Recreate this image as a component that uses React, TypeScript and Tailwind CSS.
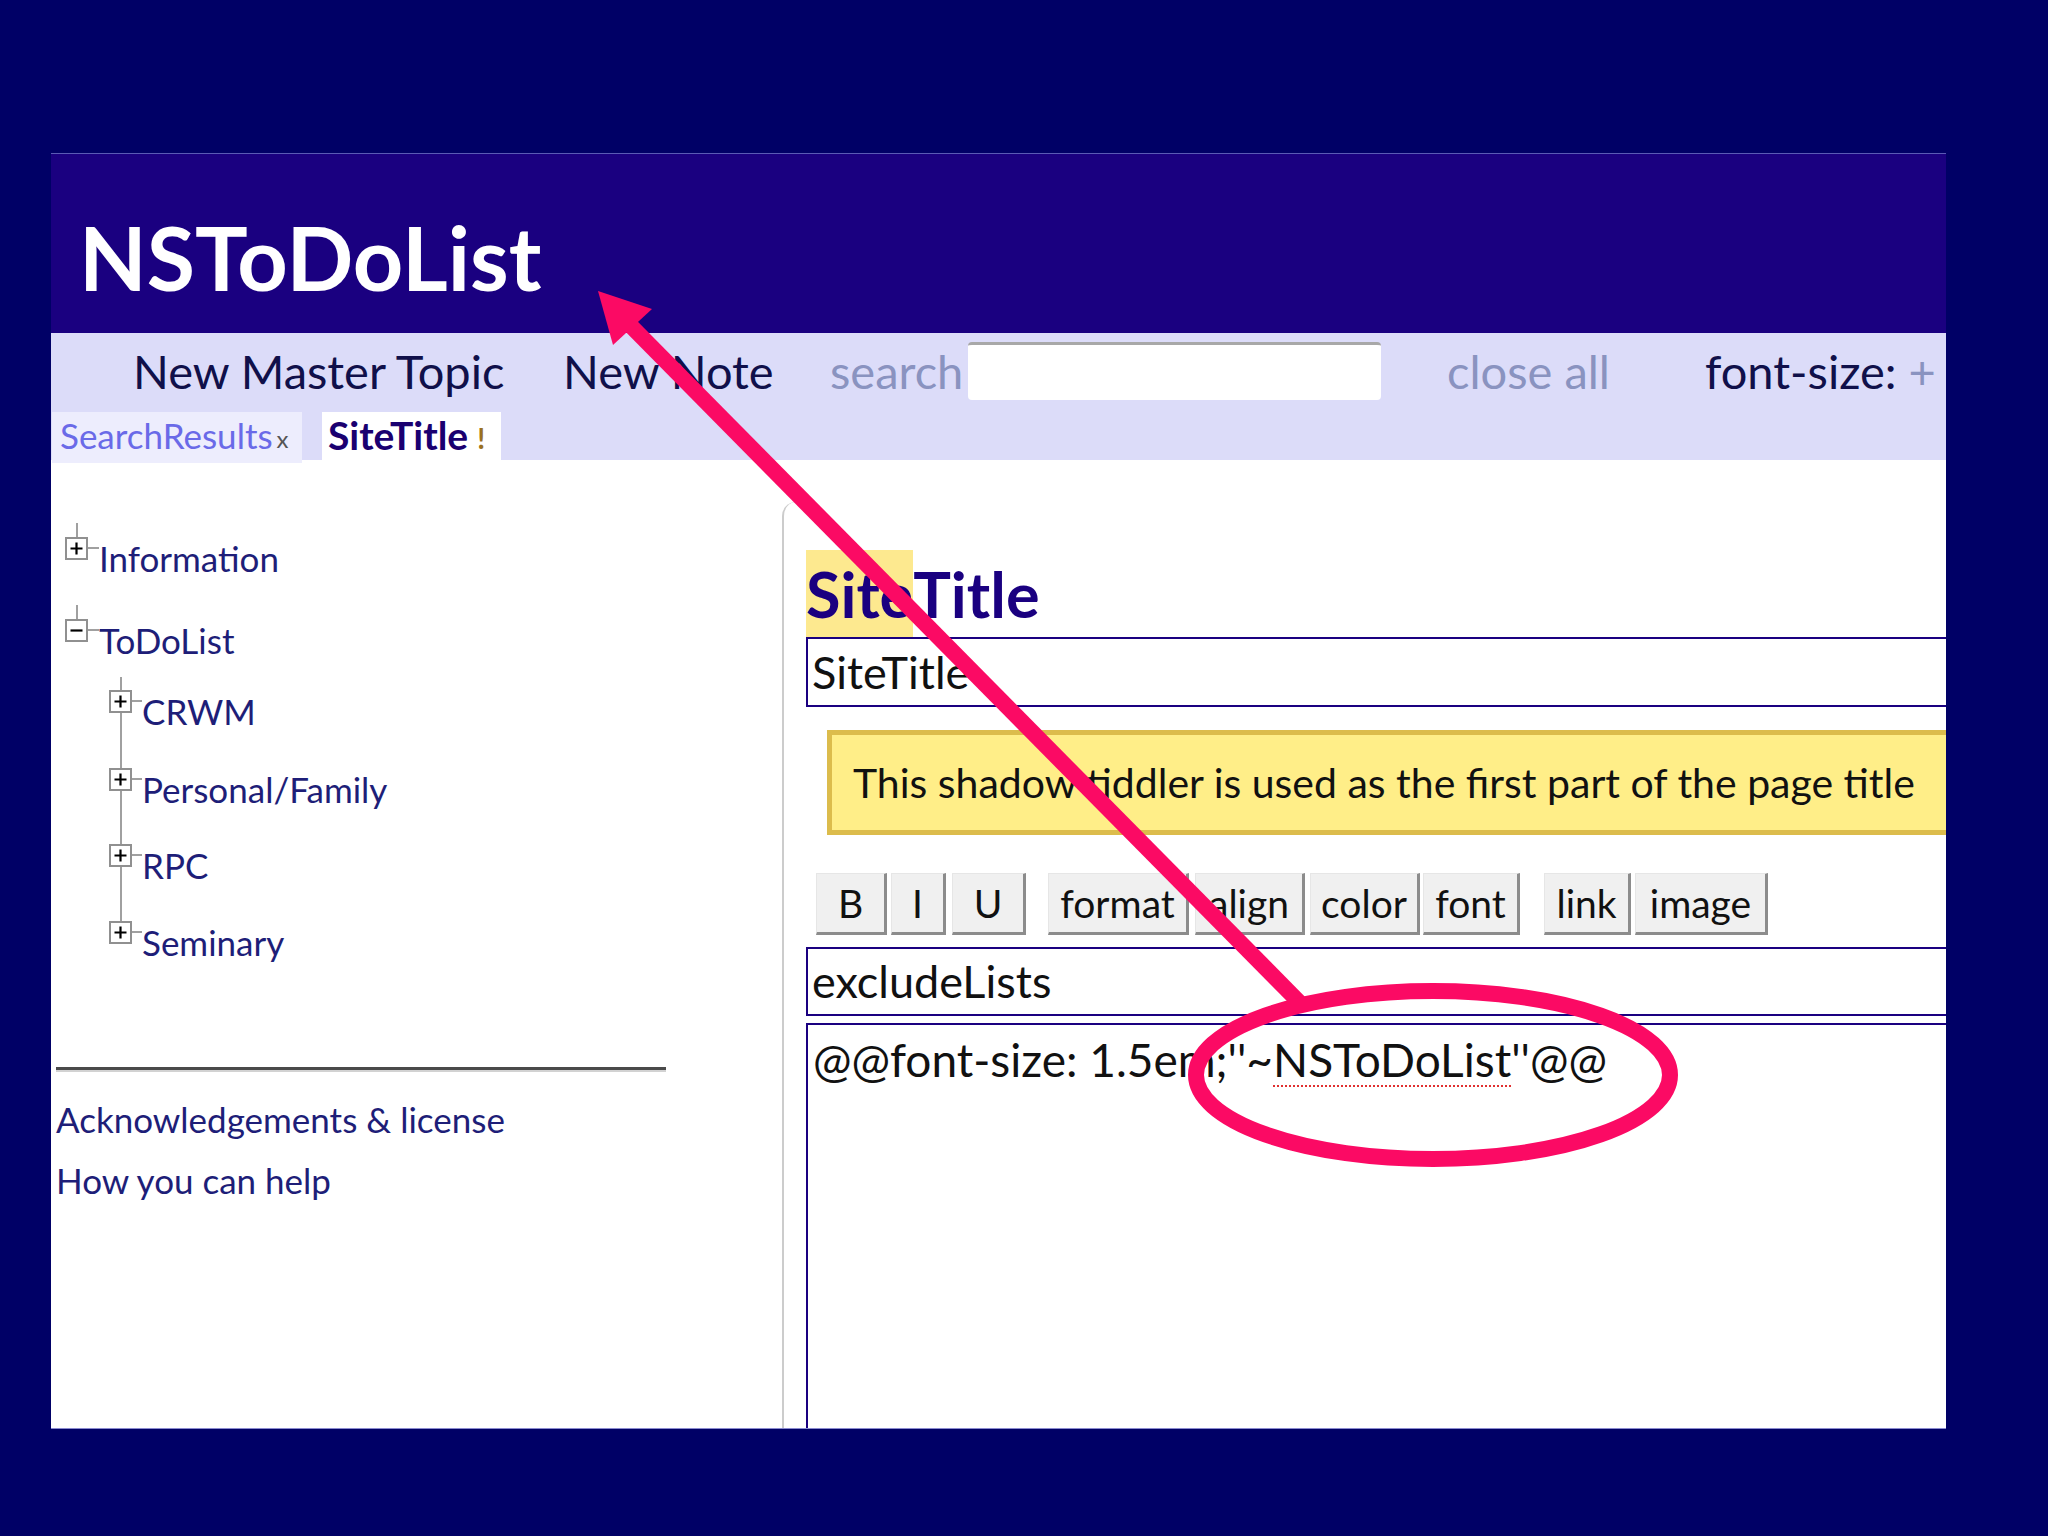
import React from "react";

const navy = "text-[#1e1e78]";

function ToggleBox({ open }: { open?: boolean }) {
  return (
    <div className="w-[23px] h-[23px] shrink-0 border-2 border-[#909090] bg-white flex items-center justify-center">
      <svg width="15" height="15" viewBox="0 0 15 15">
        <path d={open ? "M1.5 7.5h12" : "M1.5 7.5h12M7.5 1.5v12"} stroke="#000" strokeWidth="2.2" fill="none" />
      </svg>
    </div>
  );
}

function TreeRow({ label, stub, open, wire }: { label: string; stub: string; open?: boolean; wire: string }) {
  return (
    <div className="flex">
      <div className="w-[23px] flex flex-col items-center shrink-0">
        <div className={`w-[2px] bg-[#a0a0a0] ${stub}`} />
        <ToggleBox open={open} />
      </div>
      <div className="flex flex-col">
        <div className={stub} />
        <div className="h-[23px] flex items-start">
          <div className={`h-[2px] bg-[#a0a0a0] mt-[10px] ${wire}`} />
          <span className={`mt-[4px] leading-none text-[35px] whitespace-nowrap ${navy}`}>{label}</span>
        </div>
      </div>
    </div>
  );
}

const buttons = [
  { t: "B", w: "w-[71px]", ml: "ml-0" },
  { t: "I", w: "w-[55px]", ml: "ml-[4px]" },
  { t: "U", w: "w-[74px]", ml: "ml-[6px]" },
  { t: "format", w: "w-[141px]", ml: "ml-[22px]" },
  { t: "align", w: "w-[110px]", ml: "ml-[6px]" },
  { t: "color", w: "w-[110px]", ml: "ml-[5px]" },
  { t: "font", w: "w-[97px]", ml: "ml-[3px]" },
  { t: "link", w: "w-[87px]", ml: "ml-[24px]" },
  { t: "image", w: "w-[133px]", ml: "ml-[4px]" },
];

export default function App() {
  return (
    <div className="relative w-[2048px] h-[1536px] bg-[#000066] pt-[153px] pl-[51px] overflow-hidden font-['Lato','Noto_Sans',sans-serif]">
      <div className="w-[1895px] h-[1276px] bg-white overflow-hidden flex flex-col border-b border-[#8a8ad0]">
        {/* Header */}
        <div className="h-[180px] shrink-0 bg-[#1a0080] border-t border-[#5a5ab4] pl-[28px] pt-[59px]">
          <div className="text-[88px] font-bold leading-none text-white">NSToDoList</div>
        </div>

        {/* Menu bar */}
        <div className="h-[127px] shrink-0 bg-[#dcdcf9] flex flex-col">
          <div className="h-[58px] mt-[9px] flex items-center pl-[82px] text-[47px] leading-none whitespace-nowrap">
            <div className="w-[430px] text-[#10104a]">New Master Topic</div>
            <div className="w-[267px] text-[#10104a]">New Note</div>
            <div className="w-[138px] text-[#8a93c0]">search</div>
            <div className="w-[413px] h-[58px] shrink-0 bg-white rounded-[4px] border-t-[3px] border-[#a8a8a8]" />
            <div className="w-[66px] shrink-0" />
            <div className="w-[258px] text-[#8a93c0]">close all</div>
            <div className="text-[#10104a]">
              font-size: <span className="text-[#8a93c0]">+</span>
            </div>
          </div>
          <div className="mt-[12px] h-[48px] flex items-start pl-[1px] leading-none whitespace-nowrap">
            <div className="w-[250px] h-[51px] bg-[#ededfd] pl-[8px] pt-[6px] flex items-start">
              <span className="text-[35px] text-[#6a6ae8]">SearchResults</span>
              <span className="ml-[4px] mt-[9px] text-[24px] text-[#555555]">x</span>
            </div>
            <div className="ml-[20px] w-[179px] h-[48px] bg-white pl-[6px] pt-[4px] flex items-start">
              <span className="text-[39px] font-bold text-[#1a0070]">SiteTitle</span>
              <span className="ml-[9px] mt-[8px] text-[28px] font-bold text-[#9a7020]">!</span>
            </div>
          </div>
        </div>

        {/* Content */}
        <div className="flex flex-1 min-h-0">
          {/* Sidebar */}
          <div className="w-[731px] shrink-0 pl-[5px] pt-[63px]">
            <div className="pl-[9px]">
              <TreeRow label="Information" stub="h-[14px]" wire="w-[11px]" />
              <div className="mt-[45px]">
                <TreeRow label="ToDoList" stub="h-[14px]" wire="w-[11px]" open />
              </div>
              <div className="mt-[35px] ml-[44px]">
                <TreeRow label="CRWM" stub="h-[13px]" wire="w-[10px]" />
                <TreeRow label="Personal/Family" stub="h-[55px]" wire="w-[10px]" />
                <TreeRow label="RPC" stub="h-[53px]" wire="w-[10px]" />
                <TreeRow label="Seminary" stub="h-[54px]" wire="w-[10px]" />
              </div>
            </div>
            <div className="mt-[123px] w-[610px] h-[5px] border-t-[3px] border-[#4a4a4a] border-b-2 border-b-[#d2d2d2]" />
            <div className={`mt-[30px] text-[35px] leading-none whitespace-nowrap ${navy}`}>Acknowledgements &amp; license</div>
            <div className={`mt-[26px] text-[35px] leading-none whitespace-nowrap ${navy}`}>How you can help</div>
          </div>

          {/* Tiddler editor */}
          <div className="flex-1 mt-[42px] border-l-2 border-[#cccccc] rounded-tl-[14px] pl-[22px] pt-[48px] min-w-0">
            <div className="h-[87px] leading-[87px] text-[63px] font-bold text-[#1a0080] whitespace-nowrap">
              <span className="inline-block h-[87px] bg-[#fde98f]">Site</span>Title
            </div>
            <div className="w-[1400px] h-[70px] border-2 border-[#1a0080] pl-[4px] text-[45px] leading-[66px] text-[#111111] whitespace-nowrap">
              SiteTitle
            </div>
            <div className="ml-[21px] mt-[23px] w-[1400px] h-[105px] bg-[#ffee88] border-[5px] border-[#dcbc4c] pl-[21px] text-[41px] leading-[95px] text-[#111111] whitespace-nowrap">
              This shadow tiddler is used as the first part of the page title
            </div>
            <div className="mt-[38px] ml-[10px] h-[62px] flex">
              {buttons.map((b) => (
                <div
                  key={b.t}
                  className={`${b.w} ${b.ml} h-[62px] bg-[#f0f0f0] border-l border-t border-[#e6e6e6] border-r-[3px] border-b-[3px] border-r-[#8c8c8c] border-b-[#8c8c8c] flex items-center justify-center text-[39px] leading-none text-[#111111]`}
                >
                  {b.t}
                </div>
              ))}
            </div>
            <div className="mt-[12px] w-[1400px] h-[69px] border-2 border-[#1a0080] pl-[4px] text-[45px] leading-[65px] text-[#111111] whitespace-nowrap">
              excludeLists
            </div>
            <div className="mt-[7px] w-[1400px] h-[500px] border-2 border-[#1a0080] pl-[5px] pt-[12px] text-[46px] leading-none text-[#111111] whitespace-nowrap">
              @@font-size: 1.5em;''~
              <span className="underline decoration-dotted decoration-[#e03030] decoration-2 underline-offset-[8px]">NSToDoList</span>
              ''@@
            </div>
          </div>
        </div>
      </div>

      {/* Annotation overlay */}
      <svg className="absolute inset-0 pointer-events-none" width="2048" height="1536" viewBox="0 0 2048 1536">
        <line x1="1300" y1="1003" x2="628" y2="323" stroke="#fb0a64" strokeWidth="16" />
        <polygon points="598,291 652,309 613,345" fill="#fb0a64" />
        <ellipse cx="1433" cy="1075" rx="237" ry="84" fill="none" stroke="#fb0a64" strokeWidth="16" />
      </svg>
    </div>
  );
}
